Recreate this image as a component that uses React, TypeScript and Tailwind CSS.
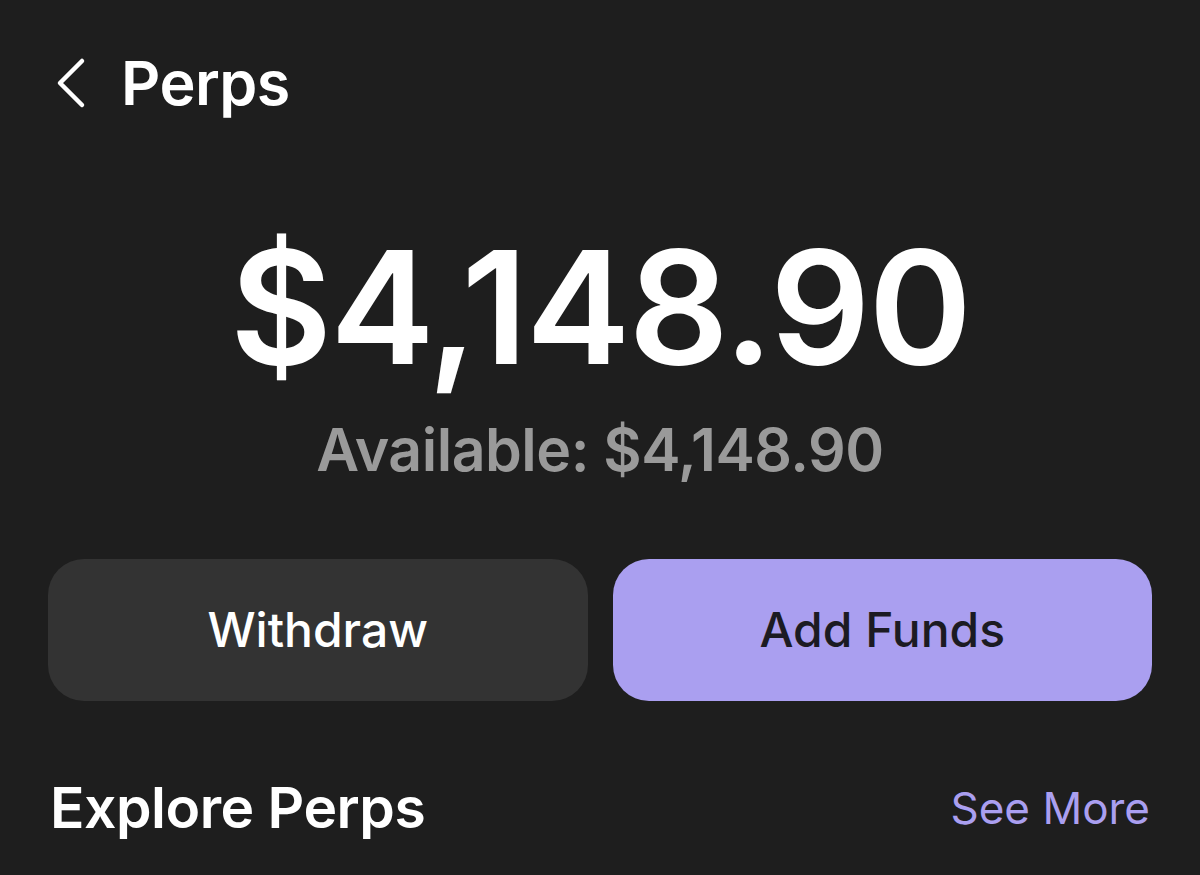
export default function App() {
  return (
    <div
      className="min-h-screen w-full bg-[#1e1e1e] text-white overflow-hidden"
      style={{ fontFamily: "Inter, 'Noto Sans', sans-serif" }}
    >
      {/* Header */}
      <div className="flex items-center h-[168px] pl-[55px] pb-[2px]">
        <svg width="32" height="52" viewBox="0 0 32 52" fill="none" className="mr-[34px]">
          <path d="M27 4 L5 26 L27 48" stroke="white" strokeWidth="4.5" strokeLinecap="round" strokeLinejoin="round" />
        </svg>
        <h1 className="text-[61px] font-semibold tracking-[-0.5px] leading-none">Perps</h1>
      </div>

      {/* Balance */}
      <div className="flex flex-col items-center">
        <div className="text-[157px] font-semibold leading-none tracking-[-2px] mt-[61px]">$4,148.90</div>
        <div className="text-[59px] font-semibold text-[#9a9a9a] leading-none mt-[34px] tracking-[-0.5px]">
          Available: $4,148.90
        </div>
      </div>

      {/* Actions */}
      <div className="grid grid-cols-2 gap-[25px] px-[48px] mt-[80px]">
        <button className="h-[142px] rounded-[36px] bg-[#333333] text-[48px] font-medium text-white">
          Withdraw
        </button>
        <button className="h-[142px] rounded-[36px] bg-[#aa9ff0] text-[48px] font-medium text-[#1c1b22]">
          Add Funds
        </button>
      </div>

      {/* Explore */}
      <div className="flex items-center justify-between px-[50px] mt-[78px]">
        <h2 className="text-[57px] font-semibold tracking-[-0.5px] leading-none">Explore Perps</h2>
        <span className="text-[44px] text-[#aa9ff0] leading-none">See More</span>
      </div>
    </div>
  );
}
